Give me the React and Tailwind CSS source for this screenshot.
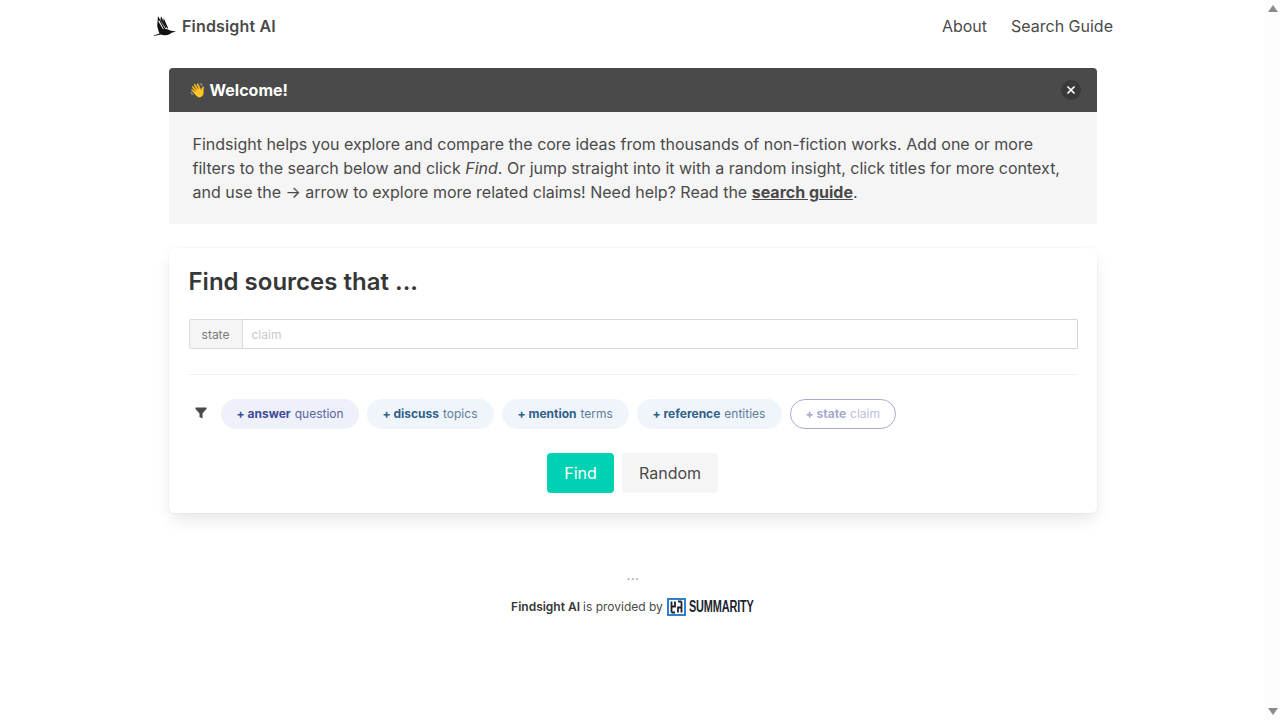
import { X } from 'lucide-react';

function BirdLogo() {
  return (
    <svg viewBox="0 0 24 22" width="24" height="22" className="shrink-0">
      <path fill="#111" d="M5 1 L11 12 L12.5 14 C14 13.6 15.5 14.5 17 15.6 L23 16.6 L18.5 17.8 C17 19.6 14 20.6 11.5 20.2 C10 20 8.8 19.6 7.8 19.4 L1 21 L0.8 20.5 L6.5 18.6 C5.4 15.5 4.6 13 4.2 10.5 Z" />
      <path fill="#111" d="M8 1.2 L13.5 12.5 L12.4 13 L7.4 5 Z" />
      <path fill="#111" d="M10.6 3 L15.2 13.2 L14.2 13.4 L10.2 7 Z" />
      <path fill="#fff" d="M6 5 L10.6 13.8 L10 14.2 L5.4 6.5 Z" />
    </svg>
  );
}

function SummarityMark() {
  return (
    <svg viewBox="0 0 19 18" width="19" height="18" className="shrink-0">
      <rect x="1" y="1" width="17" height="16" fill="#fff" stroke="#2f80d2" strokeWidth="2" />
      <path fill="none" stroke="#1c2430" strokeWidth="1.8" d="M4.5 3.5V14.5M8 3.5V8.5H4.5M14.5 3.5V14.5M11 14.5V9.5H14.5M11 3.5H14.5M4.5 14.5H8" />
    </svg>
  );
}

function FilterPill({ verb, noun, outline, bg, verbColor, nounColor, className = '' }) {
  return (
    <button
      type="button"
      className={`flex h-[30px] items-center rounded-full pl-4 text-xs whitespace-nowrap ${bg} ${outline ? 'border border-[#a9adc9] pl-[15px] pr-[15px]' : 'pr-4'} ${className}`}
    >
      <span className={`font-bold ${verbColor}`}>+ {verb}</span>
      <span className={`ml-1 ${nounColor}`}>{noun}</span>
    </button>
  );
}

export default function App() {
  return (
    <div className="flex h-[720px] w-full overflow-hidden bg-white font-['Inter',sans-serif] text-[#4a4a4a]">
      <div className="min-w-0 flex-1">
        <nav className="mx-auto flex h-[52px] w-[961px] items-center justify-between">
          <a className="flex items-center gap-[5px] pl-[1px]">
            <BirdLogo />
            <span className="text-base font-semibold tracking-[0.17px] text-[#4a4a4a]">Findsight AI</span>
          </a>
          <div className="flex items-center gap-6 text-base">
            <a>About</a>
            <a>Search Guide</a>
          </div>
        </nav>

        <div className="mx-auto mt-4 w-[928px]">
          <section className="overflow-hidden rounded-t-[4px] bg-[#f5f5f5]">
            <div className="flex h-11 items-center justify-between bg-[#4a4a4a] pl-5 pr-4 text-white">
              <p className="flex items-center gap-[4px] text-base font-bold">
                <span className="text-sm">👋</span>
                Welcome!
              </p>
              <button type="button" aria-label="Close" className="flex h-5 w-5 items-center justify-center rounded-full bg-[#3a3a3a]">
                <X size={12} strokeWidth={3.5} color="#fff" />
              </button>
            </div>
            <p className="px-6 pb-5 pt-5 text-base leading-6 text-[#4a4a4a]">
              Findsight helps you explore and compare the core ideas from thousands of non-fiction works. Add one or more
              filters to the search below and click <em>Find</em>. Or jump straight into it with a random insight, click titles for more context,
              and use the → arrow to explore more related claims! Need help? Read the{' '}
              <a className="font-bold underline">search guide</a>.
            </p>
          </section>

          <section className="mt-6 h-[265px] rounded-md bg-white px-5 pt-5 shadow-[0_8px_16px_-2px_rgba(10,10,10,0.1),0_0_0_1px_rgba(10,10,10,0.02)]">
            <h1 className="text-2xl leading-[28px] font-semibold text-[#363636]">Find sources that ...</h1>

            <div className="mt-[23px] -mr-px flex h-[30px] text-xs">
              <span className="flex w-[54px] items-center justify-center rounded-l-[2px] border border-[#dbdbdb] bg-[#f5f5f5] pt-px text-[#7a7a7a]">
                state
              </span>
              <input
                placeholder="claim"
                className="min-w-0 flex-1 rounded-r-[2px] border border-l-0 border-[#d6d6d6] bg-white px-[9px] pt-px text-xs outline-none placeholder:text-[#c8c8c8]"
              />
            </div>

            <div className="mt-[25px] h-px bg-[#f0f0f0]" />

            <div className="mt-6 flex items-center gap-2">
              <span className="flex w-6 justify-center pb-[2px]">
                <svg viewBox="0 0 12 12" width="12" height="12">
                  <path fill="#4a4a4a" d="M0.5 0.5H11.5V2L7.5 6.5V11.5L4.5 10V6.5L0.5 2Z" />
                </svg>
              </span>
              <FilterPill verb="answer" noun="question" className="w-[138px]" bg="bg-[#eef1fa]" verbColor="text-[#3e4a9c]" nounColor="text-[#5b659f]" />
              <FilterPill verb="discuss" noun="topics" className="w-[127px]" bg="bg-[#eff5fb]" verbColor="text-[#2f5f8a]" nounColor="text-[#5f7d99]" />
              <FilterPill verb="mention" noun="terms" className="w-[127px]" bg="bg-[#eff5fb]" verbColor="text-[#2f5f8a]" nounColor="text-[#5f7d99]" />
              <FilterPill verb="reference" noun="entities" className="w-[145px]" bg="bg-[#eff5fb]" verbColor="text-[#2f5f8a]" nounColor="text-[#5f7d99]" />
              <FilterPill verb="state" noun="claim" outline bg="bg-white" verbColor="text-[#a4a9cb]" nounColor="text-[#bcc0d8]" />
            </div>

            <div className="mt-6 flex justify-center gap-2">
              <button type="button" className="h-10 w-[67px] rounded bg-[#00d1b2] text-base text-white">
                Find
              </button>
              <button type="button" className="h-10 w-[96px] rounded bg-[#f5f5f5] text-base text-[#4a4a4a]">
                Random
              </button>
            </div>
          </section>
        </div>

        <div className="mt-[57px] flex flex-col items-center">
          <span className="pl-px text-[11px] leading-[12px] font-bold tracking-[0.5px] text-[#a0a0a0]">...</span>
          <p className="mt-[17px] flex h-4 items-center text-xs text-[#4a4a4a]">
            <strong className="font-semibold text-[#363636]">Findsight AI</strong>
            <span className="ml-[3px]">is provided by</span>
            <span className="ml-[4px] flex items-center gap-[3px]">
              <SummarityMark />
              <span className="block w-[65px] origin-left scale-x-[0.68] font-['Liberation_Sans',sans-serif] text-base leading-[18px] font-bold tracking-[-0.2px] whitespace-nowrap text-[#1c2430]">SUMMARITY</span>
            </span>
          </p>
        </div>
      </div>

      <aside className="flex w-[15px] shrink-0 flex-col items-center justify-between bg-[#fdfdfd] py-[5px]">
        <span className="h-0 w-0 border-x-[5px] border-b-[7px] border-x-transparent border-b-[#8a8a8a]" />
        <span className="h-0 w-0 border-x-[5px] border-t-[7px] border-x-transparent border-t-[#8a8a8a]" />
      </aside>
    </div>
  );
}
